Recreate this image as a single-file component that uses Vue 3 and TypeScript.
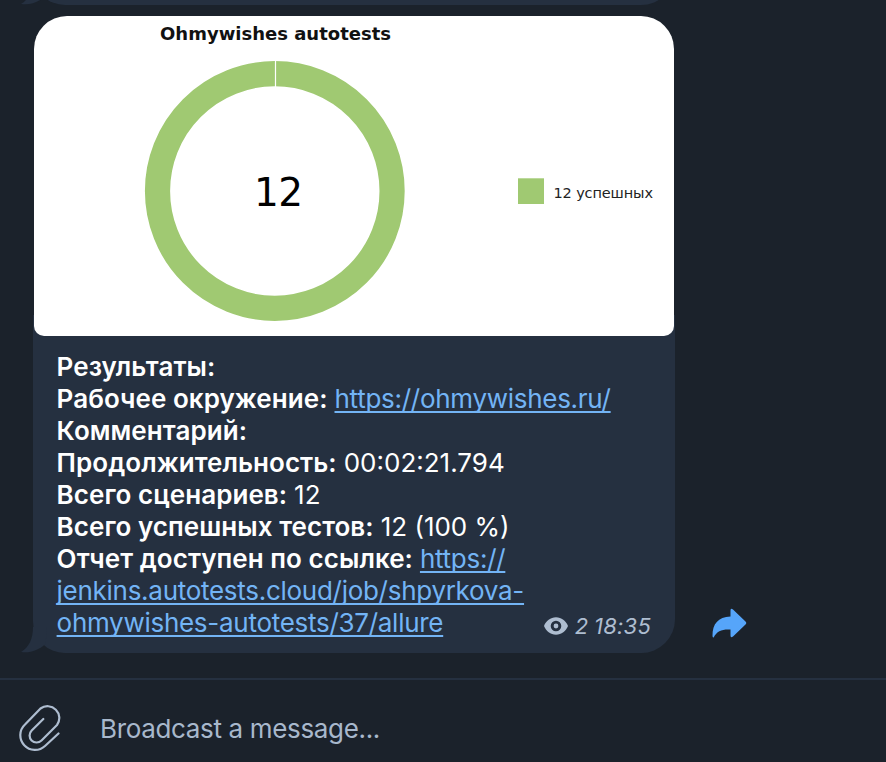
<script setup lang="ts">
interface Part {
  text: string
  kind: 'label' | 'value' | 'link'
}

const lines: Part[][] = [
  [{ text: 'Результаты:', kind: 'label' }],
  [
    { text: 'Рабочее окружение:', kind: 'label' },
    { text: 'https://ohmywishes.ru/', kind: 'link' },
  ],
  [{ text: 'Комментарий:', kind: 'label' }],
  [
    { text: 'Продолжительность:', kind: 'label' },
    { text: '00:02:21.794', kind: 'value' },
  ],
  [
    { text: 'Всего сценариев:', kind: 'label' },
    { text: '12', kind: 'value' },
  ],
  [
    { text: 'Всего успешных тестов:', kind: 'label' },
    { text: '12 (100 %)', kind: 'value' },
  ],
  [
    { text: 'Отчет доступен по ссылке:', kind: 'label' },
    { text: 'https://', kind: 'link' },
  ],
  [{ text: 'jenkins.autotests.cloud/job/shpyrkova-', kind: 'link' }],
  [{ text: 'ohmywishes-autotests/37/allure', kind: 'link' }],
]
</script>

<template>
  <main class="chat">
    <section class="feed">
      <div class="previous">
        <svg class="tail" width="26" height="26" viewBox="0 0 26 26">
          <path d="M12 0C12 12 8 20 0 25C9 26.500 18 23 24.500 17L26 0Z" />
        </svg>
      </div>
      <div class="row">
        <article class="bubble">
          <svg class="chart" width="640" height="320" viewBox="0 0 640 320">
            <text class="chart-title" x="126" y="24" textLength="231">Ohmywishes autotests</text>
            <circle class="ring" cx="240.8" cy="175" r="117.3" />
            <path class="seam" d="M241.500 44V71" />
            <text class="total" x="220" y="189.500" textLength="49">12</text>
            <rect class="swatch" x="484" y="162.300" width="26" height="25.700" />
            <text class="legend" x="519.500" y="182" textLength="99.500">12 успешных</text>
          </svg>
          <div class="content">
            <div v-for="(line, i) in lines" :key="i" class="line">
              <template v-for="(part, j) in line" :key="j">
                <a v-if="part.kind === 'link'" class="link">{{ part.text }}</a>
                <b v-else-if="part.kind === 'label'" class="label">{{ part.text }}</b>
                <span v-else class="value">{{ part.text }}</span>
              </template>
            </div>
          </div>
          <footer class="meta">
            <svg class="eye" width="24" height="18" viewBox="0 0 24 18">
              <path fill-rule="evenodd" d="M12 .3C6.500.3 2 3.800 0 9c2 5.200 6.500 8.700 12 8.700S22 14.200 24 9C22 3.800 17.500.3 12 .3ZM12 3.700a5.300 5.300 0 1 1 0 10.600a5.300 5.300 0 1 1 0-10.600ZM12 6.600a2.400 2.400 0 1 0 0 4.800a2.400 2.400 0 1 0 0-4.800Z" />
            </svg>
            <span class="views">2</span>
            <span class="time">18:35</span>
          </footer>
          <svg class="tail" width="26" height="26" viewBox="0 0 26 26">
            <path d="M12 0C12 12 8 20 0 25C9 26.500 18 23 24.500 17L26 0Z" />
          </svg>
        </article>
        <svg class="share" width="36" height="32" viewBox="0 0 36 32">
          <path d="M18.500 2.500Q18.500-.5 21 1.500L33.500 13.500Q35 15 33.500 16.500L21 28.500Q18.500 30.500 18.500 27.500V21.500C10 21 5 23 1.800 29.200Q.5 30 .5 27.500C.5 16 6 9 18.500 8.500Z" />
        </svg>
      </div>
    </section>
    <section class="composer">
      <svg class="clip" width="44" height="50" viewBox="0 0 44 50">
        <path d="M24.300 15L12.700 26.500A7 7 0 0 0 22.500 36.500L38 21A11.800 11.800 0 0 0 21.500 4.500L6 20.500A14.600 14.600 0 0 0 26 42L39.500 29.500" />
      </svg>
      <span class="placeholder">Broadcast a message...</span>
    </section>
  </main>
</template>

<style>
body {
  margin: 0;
  background: #1b222b;
}
</style>

<style scoped>
.chat {
  width: 886px;
  height: 762px;
  display: flex;
  flex-direction: column;
  overflow: hidden;
  background: #1b222b;
  font-family: Inter, "Liberation Sans", sans-serif;
}
.feed {
  height: 678px;
  overflow: hidden;
}
.previous {
  position: relative;
  box-sizing: border-box;
  width: 642px;
  height: 48px;
  margin: -43px 0 0 33px;
  background: #253040;
  border-radius: 0 0 34px 32px;
}
.row {
  display: flex;
  align-items: flex-end;
  gap: 37px;
  padding: 10px 0 0 33px;
}
.bubble {
  position: relative;
  box-sizing: border-box;
  width: 642px;
  height: 638px;
  padding: 1px;
  background: linear-gradient(#253040, #253040) 0 300px / 100% 338px no-repeat;
  border-radius: 34px 34px 34px 32px;
}
.tail {
  position: absolute;
  left: -12px;
  bottom: 0;
  fill: #253040;
}
.chart {
  display: block;
  background: #fff;
  border-radius: 33px 33px 10px 10px;
  font-family: "DejaVu Sans", sans-serif;
}
.chart-title {
  font-size: 18px;
  font-weight: 700;
  fill: #111;
}
.ring {
  fill: none;
  stroke: #a0c972;
  stroke-width: 25.2;
}
.seam {
  stroke: #fff;
  stroke-width: 1.2;
}
.total {
  font-size: 39px;
}
.swatch {
  fill: #a0c972;
}
.legend {
  font-size: 14.5px;
  fill: #222;
}
.content {
  padding: 15px 22px 0 22.6px;
}
.line {
  display: flex;
  gap: 7px;
  height: 32px;
  line-height: 32px;
  font-size: 26px;
  color: #fff;
  white-space: nowrap;
}
.label {
  font-weight: 600;
  letter-spacing: 0.05px;
}
.link {
  color: #73b4f5;
  letter-spacing: -0.28px;
  text-decoration: underline;
  text-decoration-thickness: 2px;
  text-decoration-skip-ink: none;
  text-underline-offset: 3px;
}
.meta {
  position: absolute;
  right: 24px;
  bottom: 14px;
  display: flex;
  align-items: center;
  height: 26px;
  font-size: 22px;
  font-style: italic;
  letter-spacing: 0.25px;
  color: #aebdd0;
}
.eye {
  margin-right: 7px;
  fill: #aebdd0;
}
.views {
  margin-right: 5.5px;
}
.share {
  margin-bottom: 13px;
  fill: #56a5fa;
}
.composer {
  box-sizing: border-box;
  display: flex;
  align-items: center;
  height: 84px;
  padding: 16px 0 0 19px;
  border-top: 2px solid #253040;
}
.clip {
  margin-right: 37px;
  fill: none;
  stroke: #aebdd0;
  stroke-width: 2.2;
  stroke-linecap: round;
  stroke-linejoin: round;
}
.placeholder {
  font-size: 26px;
  line-height: 32px;
  letter-spacing: -0.34px;
  color: #a8b8cc;
}
</style>
